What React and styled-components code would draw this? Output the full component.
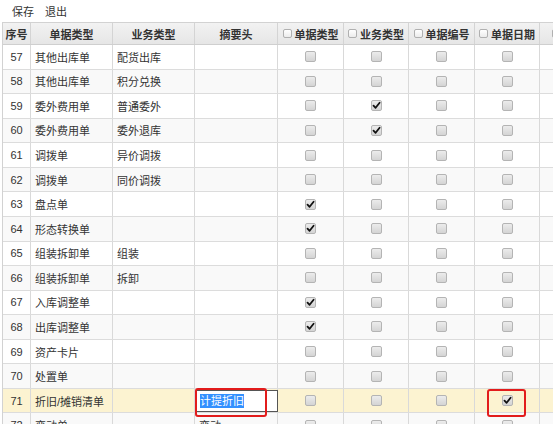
import React from "react";
import styled, { createGlobalStyle } from "styled-components";

const GlobalStyle = createGlobalStyle`
  html, body { margin: 0; padding: 0; background: #fff; }
  body {
    font-family: "Liberation Sans", "Noto Sans CJK SC", sans-serif;
    font-size: 11px;
    color: #333;
    overflow: hidden;
  }
`;

const Page = styled.div`
  width: 553px;
  height: 424px;
  overflow: hidden;
  display: flex;
  flex-direction: column;
`;

const Toolbar = styled.div`
  flex: none;
  height: 22px;
  display: flex;
  align-items: center;
  gap: 11px;
  padding: 0 0 0 12px;
  box-sizing: border-box;
`;

const ToolButton = styled.span`
  font-size: 11px;
  color: #333;
  cursor: pointer;
`;

const Grid = styled.div`
  flex: none;
  margin-left: 2px;
  width: 620px;
  display: flex;
  flex-direction: column;
  border-left: 1px solid #d2d2d2;
  border-top: 1px solid #d2d2d2;
`;

const cols = "28px 82px 82px 83px 66px 65px 66px 65px 80px";

const HeadRow = styled.div`
  display: grid;
  grid-template-columns: ${cols};
  height: 22px;
  background: linear-gradient(#f2f2f2, #e6e6e6);
  border-bottom: 1px solid #cfcfcf;
  box-sizing: border-box;
`;

const HeadCell = styled.div`
  display: flex;
  align-items: center;
  justify-content: center;
  gap: 3px;
  font-weight: bold;
  font-size: 11px;
  color: #333;
  border-right: 1px solid #d4d4d4;
  white-space: nowrap;
  overflow: hidden;
  box-sizing: border-box;
`;

const Row = styled.div`
  display: grid;
  grid-template-columns: ${cols};
  height: 24.57px;
  box-sizing: border-box;
  border-bottom: 1px solid #dcdcdc;
  background: ${(p) => (p.$active ? "#fcf3d1" : p.$stripe ? "#f9f9f9" : "#fff")};
`;

const Cell = styled.div`
  position: relative;
  display: flex;
  align-items: center;
  justify-content: ${(p) => (p.$align === "center" ? "center" : "flex-start")};
  padding: ${(p) => (p.$align === "center" ? "0" : "0 0 0 4px")};
  border-right: 1px solid #d9d9d9;
  white-space: nowrap;
  overflow: visible;
  box-sizing: border-box;
  font-size: 11px;
  color: #333;
`;

const HeadBox = styled.span`
  width: 9px;
  height: 9px;
  border: 1px solid #b0b0b0;
  border-radius: 2px;
  background: linear-gradient(#ffffff, #ececec);
  box-sizing: border-box;
  flex: none;
`;

const Box = styled.span`
  width: 11px;
  height: 11px;
  border: 1px solid #b4b4b4;
  border-radius: 2px;
  background: linear-gradient(#ececec, #d4d4d4);
  box-sizing: border-box;
  display: flex;
  align-items: center;
  justify-content: center;
  flex: none;
`;

const EditBox = styled.div`
  position: absolute;
  left: 1px;
  top: 1px;
  right: -1px;
  bottom: 0px;
  border: 1px solid #555;
  background: #fff;
  display: flex;
  align-items: center;
  padding-left: 3px;
`;

const Selected = styled.span`
  background: #3390ff;
  color: #fff;
  line-height: 14px;
`;

const Mark = styled.div`
  position: absolute;
  border: 2px solid #e21c1c;
  border-radius: 3px;
  pointer-events: none;
  left: ${(p) => p.$l}px;
  top: ${(p) => p.$t}px;
  width: ${(p) => p.$w}px;
  height: ${(p) => p.$h}px;
  box-sizing: border-box;
  z-index: 2;
`;

const Check = () => (
  <svg width="9" height="9" viewBox="0 0 9 9">
    <path d="M1.5 4.6 L3.6 6.8 L7.6 1.8" fill="none" stroke="#111" strokeWidth="1.8" strokeLinecap="round" strokeLinejoin="round" />
  </svg>
);

const CheckBox = ({ checked }) => <Box>{checked ? <Check /> : null}</Box>;

const rows = [
  { n: 57, a: "其他出库单", b: "配货出库", c: [] },
  { n: 58, a: "其他出库单", b: "积分兑换", c: [] },
  { n: 59, a: "委外费用单", b: "普通委外", c: [1] },
  { n: 60, a: "委外费用单", b: "委外退库", c: [1] },
  { n: 61, a: "调拨单", b: "异价调拨", c: [] },
  { n: 62, a: "调拨单", b: "同价调拨", c: [] },
  { n: 63, a: "盘点单", b: "", c: [0] },
  { n: 64, a: "形态转换单", b: "", c: [0] },
  { n: 65, a: "组装拆卸单", b: "组装", c: [] },
  { n: 66, a: "组装拆卸单", b: "拆卸", c: [] },
  { n: 67, a: "入库调整单", b: "", c: [0] },
  { n: 68, a: "出库调整单", b: "", c: [0] },
  { n: 69, a: "资产卡片", b: "", c: [] },
  { n: 70, a: "处置单", b: "", c: [] },
  { n: 71, a: "折旧/摊销清单", b: "", c: [3], active: true },
  { n: 72, a: "变动单", b: "", d: "变动", c: [] },
];

const checkHeads = ["单据类型", "业务类型", "单据编号", "单据日期", "单据状态"];

export default function App() {
  return (
    <Page>
      <GlobalStyle />
      <Toolbar>
        <ToolButton>保存</ToolButton>
        <ToolButton>退出</ToolButton>
      </Toolbar>
      <Grid>
        <HeadRow>
          <HeadCell>序号</HeadCell>
          <HeadCell>单据类型</HeadCell>
          <HeadCell>业务类型</HeadCell>
          <HeadCell>摘要头</HeadCell>
          {checkHeads.map((h) => (
            <HeadCell key={h}>
              <HeadBox />
              {h}
            </HeadCell>
          ))}
        </HeadRow>
        {rows.map((r) => (
          <Row key={r.n} $stripe={r.n % 2 === 0} $active={r.active}>
            <Cell $align="center">{r.n}</Cell>
            <Cell>{r.a}</Cell>
            <Cell>{r.b}</Cell>
            <Cell>
              {r.active ? (
                <>
                  <EditBox>
                    <Selected>计提折旧</Selected>
                  </EditBox>
                  <Mark $l={0} $t={-1} $w={72} $h={29} />
                </>
              ) : (
                r.d || ""
              )}
            </Cell>
            {[0, 1, 2, 3].map((i) => (
              <Cell key={i} $align="center">
                <CheckBox checked={r.c.includes(i)} />
                {r.active && i === 3 ? <Mark $l={12} $t={0} $w={39} $h={28} /> : null}
              </Cell>
            ))}
            <Cell $align="center" />
          </Row>
        ))}
      </Grid>
    </Page>
  );
}
